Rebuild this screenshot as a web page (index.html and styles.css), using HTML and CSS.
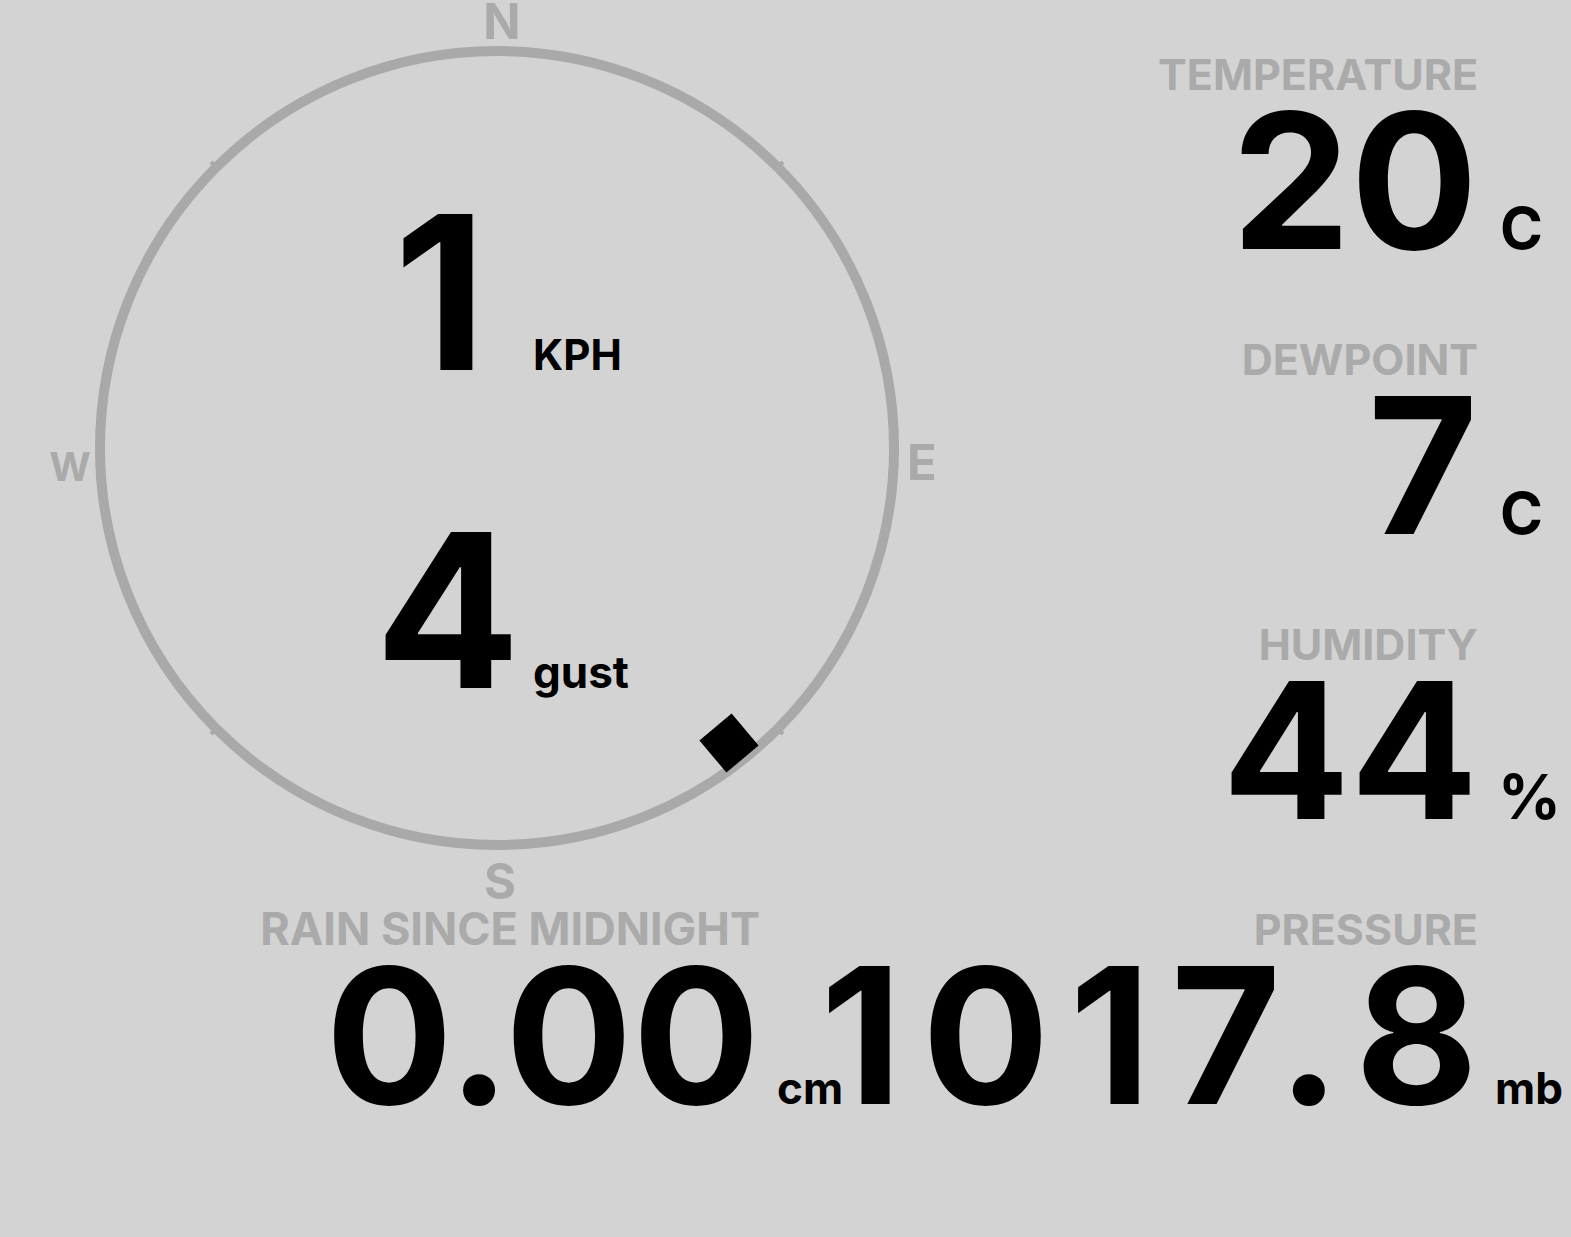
FILE: index.html
```html
<!DOCTYPE html>
<html lang="en">
<head>
    <meta charset="UTF-8">
    <meta name="viewport" content="width=device-width, initial-scale=1.0">
    <title>Weather</title>
    <link rel="stylesheet" href="styles.css">
</head>
<body>
    <div class="board">
        <div class="left">
            <div class="compass">
                <svg class="dial" width="1000" height="907" viewBox="0 0 1000 907">
                    <circle cx="497" cy="448" r="397" fill="none" stroke="#a9a9a9" stroke-width="10"/>
                    <g stroke="#a9a9a9" stroke-width="4">
                        <line x1="778" y1="167" x2="783" y2="162"/>
                        <line x1="216" y1="167" x2="211" y2="162"/>
                        <line x1="778" y1="729" x2="783" y2="734"/>
                        <line x1="216" y1="729" x2="211" y2="734"/>
                    </g>
                    <g class="point">
                        <text x="502" y="39" text-anchor="middle">N</text>
                        <text x="922" y="480" text-anchor="middle">E</text>
                        <text x="500" y="899" text-anchor="middle">S</text>
                        <text x="70" y="481" text-anchor="middle" class="small">W</text>
                    </g>
                    <rect x="-21" y="-21" width="42" height="42" fill="#000" transform="translate(729 743) rotate(50)"/>
                </svg>
                <div class="readings">
                    <div class="reading">
                        <span class="speed">1</span>
                        <span class="speed-unit">KPH</span>
                    </div>
                    <div class="reading gust">
                        <span class="speed">4</span>
                        <span class="speed-unit">gust</span>
                    </div>
                </div>
            </div>
            <div class="stat rain">
                <div class="label">RAIN SINCE MIDNIGHT</div>
                <div class="value"><span class="num">0.00</span><span class="unit small-unit">cm</span></div>
            </div>
        </div>
        <div class="right">
            <div class="stat">
                <div class="label">TEMPERATURE</div>
                <div class="value"><span class="num">20</span><span class="unit">C</span></div>
            </div>
            <div class="stat">
                <div class="label">DEWPOINT</div>
                <div class="value"><span class="num">7</span><span class="unit">C</span></div>
            </div>
            <div class="stat">
                <div class="label">HUMIDITY</div>
                <div class="value"><span class="num">44</span><span class="unit pct">%</span></div>
            </div>
            <div class="stat pressure">
                <div class="label">PRESSURE</div>
                <div class="value"><span class="num">1017.8</span><span class="unit small-unit">mb</span></div>
            </div>
        </div>
    </div>
</body>
</html>
```

FILE: styles.css
```css
body {
    margin: 0;
    padding: 0;
    background-color: #d3d3d3;
    font-family: Inter, "Noto Sans", sans-serif;
    font-weight: 700;
    color: #000;
    overflow: hidden;
}
.board {
    display: flex;
    width: 1571px;
    height: 1237px;
}
.left {
    width: 1000px;
    flex-shrink: 0;
    display: flex;
    flex-direction: column;
}
.compass {
    position: relative;
    height: 907px;
}
.dial {
    position: absolute;
    left: 0;
    top: 0;
}
.point text {
    fill: #aaa;
    font-family: Inter, "Noto Sans", sans-serif;
    font-weight: 700;
    font-size: 49px;
}
.point text.small {
    font-size: 40px;
}
.readings {
    position: relative;
    display: flex;
    flex-direction: column;
    gap: 118px;
    padding-top: 192px;
    padding-left: 375px;
}
.reading {
    display: flex;
    align-items: baseline;
}
.speed {
    width: 130px;
    text-align: center;
    font-size: 215px;
    line-height: 200px;
}
.speed-unit {
    margin-left: 28px;
    font-size: 42px;
}
.gust .speed-unit {
    font-size: 44px;
}
.right {
    flex: 1;
    min-width: 0;
    display: flex;
    flex-direction: column;
    padding-top: 52px;
    padding-right: 93px;
}
.stat {
    height: 285px;
    display: flex;
    flex-direction: column;
}
.rain {
    width: 760px;
}
.label {
    text-align: right;
    color: #aaa;
    font-size: 43px;
    line-height: 44px;
    white-space: nowrap;
}
.rain .label {
    font-size: 45px;
}
.value {
    display: flex;
    justify-content: flex-end;
    align-items: baseline;
    margin-top: 5px;
    white-space: nowrap;
}
.num {
    font-size: 189px;
    line-height: 160px;
}
.pressure .num {
    letter-spacing: 20px;
    margin-right: -20px;
}
.unit {
    width: 0;
    text-indent: 22px;
    font-size: 58px;
}
.pct {
    text-indent: 20px;
    font-size: 62px;
}
.small-unit {
    text-indent: 17px;
    font-size: 44px;
}
```
